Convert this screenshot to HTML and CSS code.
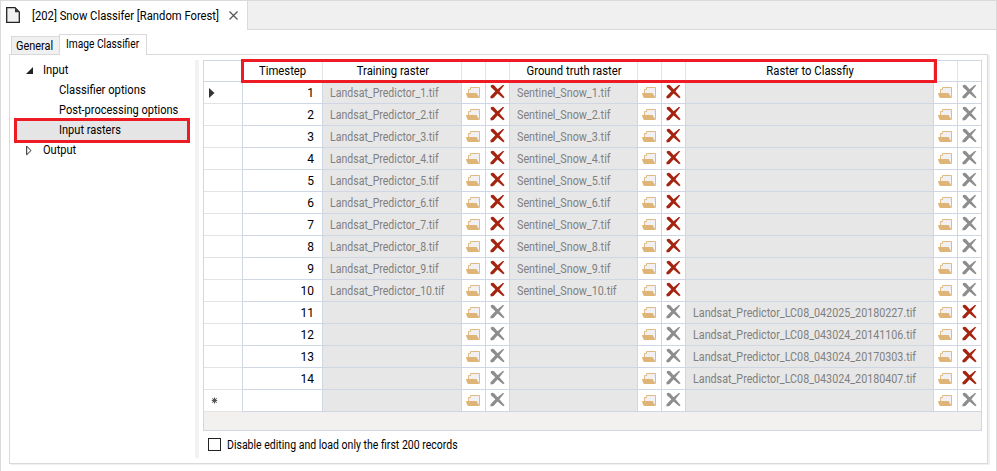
FILE: index.html
```
<!DOCTYPE html>
<html lang="en">
<head>
<meta charset="utf-8">
<title>Snow Classifer</title>
<link rel="stylesheet" href="styles.css">
</head>
<body>
<svg width="0" height="0" class="defs">
  <symbol id="folder" viewBox="0 0 14 12"><path d="M2.500 7V3.500H4.500V1.500H13.500V11.500" fill="#f1f0f2" stroke="#e0ba82"/><path d="M0 7H10.500L13.500 12H2L.8 10Z" fill="#deb577"/></symbol>
  <symbol id="cross" viewBox="0 0 15 15"><path d="M.6 1.700Q2.500 0 4.300 1.500L7.600 5.300L12.800 .9L14.300 1.200L9.400 7.200L14.600 13.300L13.200 14.200L7.500 9.500L3.500 14L.8 14.400L.3 12.500L5.300 7.300L1 3.200Z" fill="currentColor"/></symbol>
</svg>
<div class="window">
  <header class="docbar">
    <div class="doctab">
      <svg class="page" width="15" height="17" viewBox="0 0 15 17"><path d="M.7.7H9L13.300 5V15.300H.7Z" fill="#f0f0f0" stroke="#222" stroke-width="1.300"/><path d="M9 .5V5.300H13.800Z" fill="#333"/></svg>
      <span class="doctitle"><span class="fit w93">[202] Snow Classifer [Random Forest]</span></span>
      <svg class="close" width="9" height="9" viewBox="0 0 9 9"><path d="M.5.5L8.500 8.500M8.500.5L.5 8.500" stroke="#555" stroke-width="1.200"/></svg>
    </div>
    <div class="docrest"></div>
  </header>
  <nav class="tabs"><div class="tab general"><span class="fit w91">General</span></div><div class="tab active"><span class="fit w85">Image Classifier</span></div></nav>
  <main class="panel">
    <aside class="tree">
      <div class="node"><svg width="7" height="7" viewBox="0 0 7 7"><path d="M7 0V7H0Z" fill="#222"/></svg><span class="fit w93">Input</span></div>
      <div class="leaf"><span class="fit w93">Classifier options</span></div>
      <div class="leaf"><span class="fit w92">Post-processing options</span></div>
      <div class="leaf selected"><span class="fit w92">Input rasters</span></div>
      <div class="node"><svg width="7" height="11" viewBox="0 0 7 11"><path d="M.7 1.200L5 5.500L.7 9.800Z" fill="#fff" stroke="#222"/></svg><span class="fit w92">Output</span></div>
    </aside>
    <div class="splitter"></div>
    <section class="content">
      <div class="gridbox">
        <div class="grid" id="grid">
          <div class="cell head"></div><div class="cell head"><span class="fit">Timestep</span></div><div class="cell head"><span class="fit">Training raster</span></div><div class="cell head"></div><div class="cell head"></div><div class="cell head"><span class="fit">Ground truth raster</span></div><div class="cell head"></div><div class="cell head"></div><div class="cell head"><span class="fit">Raster to Classfiy</span></div><div class="cell head"></div><div class="cell head"></div>
        </div>
        <div class="outline"></div>
      </div>
      <label class="option"><i class="box"></i><span class="fit w88">Disable editing and load only the first 200 records</span></label>
    </section>
  </main>
</div>
<script src="grid.js"></script>
</body>
</html>
```
FILE: styles.css
```
* { box-sizing: border-box; }
body { margin: 0; width: 997px; height: 471px; overflow: hidden; background: #fff; color: #000; font-family: Roboto, "Liberation Sans", sans-serif; font-size: 12px; line-height: 16px; }
span { white-space: nowrap; }
svg { display: block; flex: none; }
.defs { position: absolute; }
.fit { display: inline-block; transform-origin: 0 50%; }
.w93 { transform: scaleX(.935); }
.w92 { transform: scaleX(.92); }
.w91 { transform: scaleX(.91); }
.w88 { transform: scaleX(.877); }
.w85 { transform: scaleX(.85); }
.window { height: 471px; border-left: 1px solid #dadada; border-right: 1px solid #dadada; display: flex; flex-direction: column; }
.docbar { display: flex; height: 30px; border-top: 1px solid #dadada; }
.doctab { width: 247px; border-right: 1px solid #dadada; display: flex; padding-left: 5px; }
.page { margin-top: 6px; }
.doctitle { margin: 7px 0 0 11px; width: 189px; }
.close { margin: 10px 0 0 8px; }
.docrest { flex: 1; background: #f0f0f0; border-bottom: 1px solid #dadada; }
.tabs { display: flex; align-items: flex-end; height: 25px; padding-left: 10px; margin-bottom: -1px; position: relative; }
.tab { border: 1px solid #d9d9d9; border-bottom: 0; }
.general { width: 48px; height: 19px; background: #f0f0f0; padding: 1px 0 0 4px; border-right: 0; border-bottom: 1px solid #d9d9d9; }
.active { width: 88px; height: 21px; background: #fff; padding: 1px 0 0 6px; }
.panel { margin-left: 8px; width: 979px; height: 410px; border: 1px solid #d9d9d9; display: flex; padding-top: 5px; box-shadow: 2px 1px 0 #f0f0f0; }
.tree { width: 185px; }
.node { height: 20px; display: flex; align-items: center; padding-left: 16px; }
.node svg { width: 7px; }
.node span { margin-left: 10px; }
.leaf { height: 20px; padding: 2px 0 0 49px; }
.leaf.selected { width: 176px; height: 25px; margin: -2px 0 -3px 4px; padding: 1px 0 0 42px; border: 3px solid #ed1c24; background: #e5e5e5; }
.splitter { width: 4px; height: 398px; background: #f2f2f2; }
.content { margin-left: 4px; }
.gridbox { position: relative; width: 779px; height: 371px; border: 1px solid #cfd7e5; background: #f2f1f0; }
.grid { display: grid; grid-template-columns: 39px 80px 139px 24px 24px 128px 24px 24px 248px 24px 23px; grid-template-rows: 21px; grid-auto-rows: 22px; }
.cell { border-right: 1px solid #cfd7e5; border-bottom: 1px solid #cfd7e5; background: #fff; display: flex; align-items: center; }
.cell:nth-child(11n) { border-right: 0; }
.head { justify-content: center; border-right-color: #e3e3e3; }
.head:nth-child(1) { border-right-color: #cfd7e5; }
.head .fit { transform-origin: 50% 50%; transform: translateX(.5px) scaleX(.94); }
.mark { padding-left: 5px; border-bottom-color: #e3e3e3; }
.star { margin-left: 2px; }
.num { justify-content: flex-end; padding-right: 8px; }
.file { background: #e7e7e7; color: #808080; padding-left: 7px; }
.train { transform: scaleX(.88); }
.truth { transform: scaleX(.897); }
.classify { transform: scaleX(.895); }
.icon { padding-left: 4px; color: #a5240f; }
.folder { margin-bottom: 1px; }
.cross { margin-bottom: 2px; }
.icon.off { color: #8d8d8d; }
.outline { position: absolute; left: 37px; top: -2px; width: 696px; height: 24px; border: 3px solid #ed1c24; }
.option { display: flex; padding: 7px 0 0 5px; }
.box { width: 13px; height: 13px; border: 1px solid #222; }
.option span { margin: -1px 0 0 6px; }
```
FILE: grid.js
```
const grid = document.getElementById('grid');
const scenes = ['042025_20180227', '043024_20141106', '043024_20170303', '043024_20180407'];
const icon = (name, w, h, off) => `<div class="cell icon${off ? ' off' : ''}"><svg class="${name}" width="${w}" height="${h}"><use href="#${name}"/></svg></div>`;
const file = (name, kind) => `<div class="cell file"><span class="fit ${kind}">${name}</span></div>` + icon('folder', 14, 12) + icon('cross', 15, 15, !name);
let html = '';
for (let n = 1; n <= 15; n++) {
  let mark = '';
  if (n === 1) mark = '<svg width="6" height="10" viewBox="0 0 6 10"><path d="M0 0L5.500 5L0 10Z" fill="#333"/></svg>';
  if (n === 15) mark = '<svg class="star" width="7" height="7" viewBox="0 0 7 7"><circle cx="3.500" cy="3.500" r="2" fill="#444"/><path d="M3.500 .5V6.500M.8 3.500H6.200M1.300 1.300L5.700 5.700M5.700 1.300L1.300 5.700" stroke="#555"/></svg>';
  html += `<div class="cell mark">${mark}</div><div class="cell num"><span>${n < 15 ? n : ''}</span></div>`;
  html += file(n <= 10 ? `Landsat_Predictor_${n}.tif` : '', 'train');
  html += file(n <= 10 ? `Sentinel_Snow_${n}.tif` : '', 'truth');
  html += file(n > 10 && n < 15 ? `Landsat_Predictor_LC08_${scenes[n - 11]}.tif` : '', 'classify');
}
grid.insertAdjacentHTML('beforeend', html);
```
